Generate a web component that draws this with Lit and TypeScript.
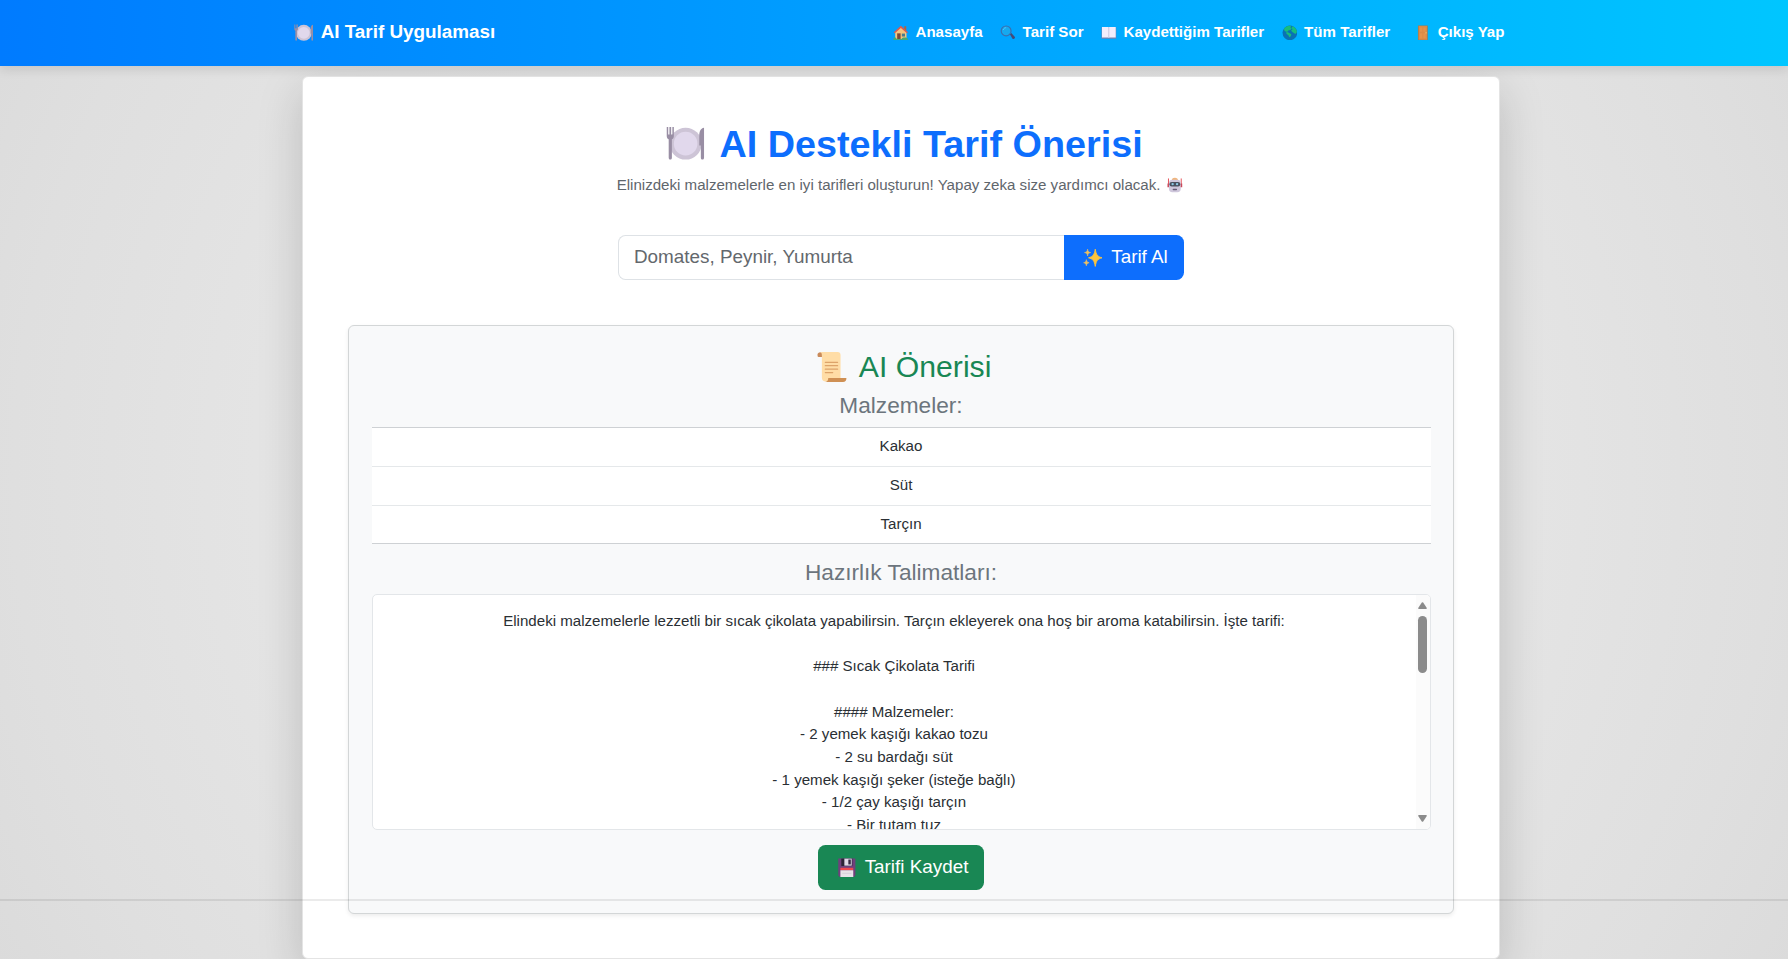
import { LitElement, html, svg, css } from "lit";
import { customElement, property } from "lit/decorators.js";

const glyphs: Record<string, unknown> = {
  plate: svg`
    <circle cx="16" cy="16" r="13" fill="#cdc4d6"/>
    <circle cx="16" cy="16" r="9.6" fill="#e1d8ec"/>
    <path d="M.6 2.5v7.2c0 1.6 .8 2.4 1.6 2.8V27.500c0 2 2.600 2 2.600 0V12.500c.8-.4 1.600-1.200 1.600-2.800V2.500h-1.200v6h-1V2.500H2.800v6h-1v-6z" fill="#998ea4"/>
    <path d="M31 3c-3 .3-3.900 3.500-3.900 7v7.500h1.300V27.500c0 2 2.600 2 2.600 0z" fill="#998ea4"/>`,
  house: svg`
    <path d="M16 4 27.500 15v14h-23V15z" fill="#f5c47c"/>
    <path d="M23 2.500h4v10l-4-4z" fill="#b4613c"/>
    <path d="M8.500 17h7v12h-7z" fill="#7a4a3a"/>
    <path d="M18 17.500h6.500v6H18z" fill="#4a7d8e"/>
    <path d="M16 1.500 1.500 15l2 2L16 6l12.500 11 2-2z" fill="#dc5a50"/>
    <path d="M1 28.500c0-4 5-4 6.500 0h10c1-3.500 11-4 13 0V31H1z" fill="#44a878"/>`,
  search: svg`
    <path d="m20 19 3-2.500 7 7.500c2 3-2 6-4.500 4z" fill="#454b78"/>
    <circle cx="12.500" cy="12" r="10" fill="#16a9ef" stroke="#3c6fae" stroke-width="2.400"/>
    <path d="M6.500 10c1-3 3.500-4.500 6-4.500" fill="none" stroke="#62cbf8" stroke-width="1.800"/>`,
  book: svg`
    <path d="M1 5h30v23H1z" fill="#7780b1"/>
    <path d="M2 4h13l1 1 1-1h13v21.500H17l-1 1-1-1H2z" fill="#f3edfc"/>
    <path d="M15.300 5h1.400v21h-1.400z" fill="#b6b5d4"/>`,
  globe: svg`
    <circle cx="16" cy="16" r="15" fill="#0a72b4"/>
    <path d="M5 6C9 2 14 1 19 1.500l-2 3.500 3 2-3 3-4 1-2 3-4-1-3-3zM21 2.500c5 1.500 9 6 9.500 12l-3 4-5-3-4-4 3-3-2-3zM9 14l5 2 5 3-1 4-3 2-2-4-4-3z" fill="#18bd7c"/>`,
  door: svg`
    <path d="M6 1h20v30H6z" fill="#a87c4c"/>
    <path d="M7.500 2h17v28h-17z" fill="#dc8b46"/>
    <path d="M10 5h5v9h-5zM17 5h5v9h-5zM10 17h5v10h-5zM17 17h5v10h-5z" fill="#e5934b"/>
    <circle cx="22.500" cy="16" r="1.300" fill="#ffd86e"/>`,
  robot: svg`
    <path d="M3 3v17M29 3v17" stroke="#e65158" stroke-width="2"/>
    <path d="M1 13h5v8H1zM26 13h5v8h-5z" fill="#c9485a"/>
    <path d="M10 4q6-5 12 0v4H10z" fill="#f0b57c"/>
    <rect x="4" y="5.500" width="24" height="25.500" rx="7" fill="#cfc7dc"/>
    <rect x="5" y="10" width="22" height="9.500" rx="4.500" fill="#4a5060"/>
    <circle cx="11.500" cy="14.500" r="2.400" fill="#8ecbe7"/><circle cx="20.500" cy="14.500" r="2.400" fill="#8ecbe7"/>
    <rect x="11.500" y="24" width="9" height="3" rx="1.500" fill="#665b76"/>`,
  sparkles: svg`
    <path d="M20 2c1.500 9 3.500 12 11 14-7.500 2-9.500 5-11 14-1.500-9-3.500-12-11-14 7.500-2 9.500-5 11-14z" fill="#fcc43c" stroke="#fcc43c" stroke-width="1.500" stroke-linejoin="round"/>
    <path d="M7.500 2c.6 3.800 1.500 4.700 5 5.500-3.500.8-4.400 1.700-5 5.500-.6-3.800-1.500-4.700-5-5.500 3.500-.8 4.400-1.700 5-5.500zM5.500 19c.6 3.200 1.400 4.200 4.500 5-3.100.8-3.900 1.800-4.500 5-.6-3.200-1.400-4.200-4.500-5 3.100-.8 3.900-1.800 4.500-5z" fill="#efc160" stroke="#efc160" stroke-width="1" stroke-linejoin="round"/>`,
  scroll: svg`
    <path d="M1.500 4C1.500.5 7 .5 7 4v2H2.500q-1 0-1-2z" fill="#c98a59"/>
    <path d="M4 1h18q3 0 3 3v23q0 4 4 4H10q-4 0-4-4V5q0-4-2-4z" fill="#ffdda6"/>
    <path d="M12.500 27.500H31q0 4-3.500 4H9.500q3-.5 3-4z" fill="#cf9054"/>
    <path d="M9.500 11.500h12.500M9.500 15h12.500M9.500 18.500h12.500M9.500 22h7.500" stroke="#dda369" stroke-width="1.300" stroke-linecap="round"/>`,
  disk: svg`
    <path d="M2 1h28v27l-2.500 3h-23L2 28.500z" fill="#70407c"/>
    <path d="M7 1h18v12H7z" fill="#2c2337"/>
    <path d="M12 1h12v11.500H12z" fill="#e0d8e7"/>
    <path d="M18.500 2.500h4v8h-4z" fill="#352a43"/>
    <path d="M5.500 16h21v4h-21z" fill="#f0474f"/>
    <path d="M5.500 20h21v11h-21z" fill="#e9e3e9"/>
    <path d="M8.500 25h15" stroke="#d3cad6" stroke-width="1.200"/>`,
};

@customElement("emoji-glyph")
class EmojiGlyph extends LitElement {
  @property() name = "";

  static styles = css`
    :host {
      display: inline-flex;
      flex: none;
      width: 1.37em;
      height: 1em;
      align-items: center;
      justify-content: center;
    }
    .art {
      display: block;
      flex: none;
      width: 1.04em;
      height: 1.04em;
    }
  `;

  render() {
    return html`<svg class="art" viewBox="0 0 32 32" aria-hidden="true">${glyphs[this.name]}</svg>`;
  }
}

@customElement("app-root")
class AppRoot extends LitElement {
  private links = [
    ["house", "Anasayfa"],
    ["search", "Tarif Sor"],
    ["book", "Kaydettiğim Tarifler"],
    ["globe", "Tüm Tarifler"],
    ["door", "Çıkış Yap"],
  ];
  private ingredients = ["Kakao", "Süt", "Tarçın"];
  private recipe = [
    "Elindeki malzemelerle lezzetli bir sıcak çikolata yapabilirsin. Tarçın ekleyerek ona hoş bir aroma katabilirsin. İşte tarifi:",
    "",
    "### Sıcak Çikolata Tarifi",
    "",
    "#### Malzemeler:",
    "- 2 yemek kaşığı kakao tozu",
    "- 2 su bardağı süt",
    "- 1 yemek kaşığı şeker (isteğe bağlı)",
    "- 1/2 çay kaşığı tarçın",
    "- Bir tutam tuz",
  ].join("\n");

  static styles = css`
    :host {
      display: block;
      position: relative;
      height: 959px;
      overflow: hidden;
      background: radial-gradient(circle at 50% 50%, #eaeaea 0, #e4e4e4 640px, #dfdfdf 880px, #dbdbdb 1020px);
      font-family: "Liberation Sans", Arial, sans-serif;
      font-size: 15.1px;
      line-height: 22.65px;
      color: #2a2f34;
    }
    * { box-sizing: border-box; }
    .bar {
      position: relative;
      height: 66px;
      padding: 0 283.500px 1px 290.500px;
      display: flex;
      align-items: center;
      justify-content: space-between;
      background: linear-gradient(90deg, #007bff, #00c6ff);
      box-shadow: 0 4px 10px rgba(0, 0, 0, 0.1);
      color: #fff;
      font-weight: 700;
      white-space: nowrap;
    }
    .brand {
      display: flex;
      align-items: center;
      gap: 4.300px;
      font-size: 18.880px;
    }
    .menu { display: flex; gap: 15.100px; }
    .link { display: flex; align-items: center; gap: 4.200px; }
    .link:last-child { margin-left: 7.500px; }
    .card {
      width: 1198px;
      height: 883px;
      margin: 10px 0 0 302px;
      padding: 38px 45px 0;
      display: flex;
      flex-direction: column;
      align-items: center;
      background: #fff;
      border: 1px solid #e4e4e4;
      border-radius: 6px;
      box-shadow: 0 15px 45px rgba(0, 0, 0, 0.175);
    }
    .title {
      display: flex;
      align-items: center;
      gap: 10.500px;
      margin: 0;
      padding-left: 2.500px;
      height: 58px;
      font-size: 37.760px;
      line-height: 58px;
      font-weight: 700;
      color: #0d6efd;
      white-space: nowrap;
    }
    .title emoji-glyph { width: 1.250em; }
    .lead {
      display: flex;
      align-items: center;
      gap: 4.200px;
      margin: 1px 0 0;
      height: 22px;
      color: #5f666c;
      white-space: nowrap;
    }
    .ask { display: flex; width: 566px; height: 45px; margin-top: 39px; }
    .field {
      flex: 1;
      min-width: 0;
      padding: 0 15px;
      border: 1px solid #dee2e6;
      border-right: 0;
      border-radius: 7.500px 0 0 7.500px;
      background: #fff;
      font: inherit;
      font-size: 18.880px;
      color: #212529;
      outline: 0;
    }
    .field::placeholder { color: #63686d; opacity: 1; }
    .btn {
      display: flex;
      align-items: center;
      justify-content: center;
      gap: 5.200px;
      height: 45px;
      padding: 0;
      border: 0;
      font: inherit;
      font-size: 18.880px;
      color: #fff;
      white-space: nowrap;
    }
    .get { width: 120px; background: #0d6efd; border-radius: 0 7.500px 7.500px 0; }
    .save { width: 166px; margin-top: 15px; background: #198754; border-radius: 7.500px; }
    .panel {
      align-self: stretch;
      height: 589px;
      margin-top: 45px;
      padding: 22px 22.500px 0;
      display: flex;
      flex-direction: column;
      align-items: center;
      background: #f8f9fa;
      border: 1px solid #d3d6d7;
      border-radius: 6px;
      box-shadow: 0 2px 4px rgba(0, 0, 0, 0.075);
    }
    .result {
      display: flex;
      align-items: center;
      gap: 8px;
      margin: 0;
      padding-left: 1px;
      height: 38px;
      font-size: 30.200px;
      font-weight: 400;
      color: #198754;
    }
    .result emoji-glyph { width: 1.300em; }
    .sub {
      margin: 0;
      font-size: 22.650px;
      line-height: 27px;
      font-weight: 400;
      color: #6c757d;
    }
    .sub.first { margin-top: 6px; }
    .sub.second { margin-top: 15px; }
    .list {
      align-self: stretch;
      margin: 8px 0 0;
      padding: 0;
      list-style: none;
      background: #fff;
      border: 1px solid #ced1d4;
      border-width: 1px 0;
    }
    .row { height: 38.330px; line-height: 35.500px; text-align: center; }
    .row + .row { border-top: 1px solid #e5e8ea; }
    .recipe {
      align-self: stretch;
      height: 236px;
      margin-top: 8px;
      display: flex;
      background: #fff;
      border: 1px solid #e3e6e9;
      border-radius: 5px;
      overflow: hidden;
    }
    .text {
      flex: 1;
      margin: 0;
      padding-top: 15px;
      font: inherit;
      text-align: center;
      white-space: pre;
    }
    .scroll {
      width: 14px;
      padding: 7px 0;
      display: flex;
      flex-direction: column;
      align-items: center;
      background: #fbfbfb;
    }
    .arrow { width: 9px; height: 7px; fill: #8b8b8b; }
    .thumb { width: 9px; height: 57px; margin: 7px 0 auto; border-radius: 4.500px; background: #8b8b8b; }
    .divider {
      position: absolute;
      left: 0;
      right: 0;
      top: 899px;
      height: 2px;
      background: rgba(0, 0, 0, 0.08);
    }
  `;

  render() {
    return html`
      <nav class="bar">
        <div class="brand"><emoji-glyph name="plate"></emoji-glyph><span>AI Tarif Uygulaması</span></div>
        <div class="menu">
          ${this.links.map(([icon, label]) => html`
            <a class="link"><emoji-glyph name=${icon}></emoji-glyph><span>${label}</span></a>`)}
        </div>
      </nav>
      <main class="card">
        <h1 class="title"><emoji-glyph name="plate"></emoji-glyph><span>AI Destekli Tarif Önerisi</span></h1>
        <p class="lead">
          <span>Elinizdeki malzemelerle en iyi tarifleri oluşturun! Yapay zeka size yardımcı olacak.</span>
          <emoji-glyph name="robot"></emoji-glyph>
        </p>
        <div class="ask">
          <input class="field" placeholder="Domates, Peynir, Yumurta" />
          <button class="btn get"><emoji-glyph name="sparkles"></emoji-glyph><span>Tarif Al</span></button>
        </div>
        <section class="panel">
          <h2 class="result"><emoji-glyph name="scroll"></emoji-glyph><span>AI Önerisi</span></h2>
          <h4 class="sub first">Malzemeler:</h4>
          <ul class="list">${this.ingredients.map((item) => html`<li class="row">${item}</li>`)}</ul>
          <h4 class="sub second">Hazırlık Talimatları:</h4>
          <div class="recipe">
            <pre class="text">${this.recipe}</pre>
            <div class="scroll">
              <svg class="arrow" viewBox="0 0 9 7"><path d="M3.800.6q.7-.9 1.400 0L8.800 6q.2 1-.7 1H.9Q0 7 .2 6z"/></svg>
              <div class="thumb"></div>
              <svg class="arrow" viewBox="0 0 9 7"><path d="M3.800 6.400q.7.9 1.400 0L8.800 1Q9 0 8.100 0H.9Q0 0 .2 1z"/></svg>
            </div>
          </div>
          <button class="btn save"><emoji-glyph name="disk"></emoji-glyph><span>Tarifi Kaydet</span></button>
        </section>
      </main>
      <div class="divider"></div>
    `;
  }
}
